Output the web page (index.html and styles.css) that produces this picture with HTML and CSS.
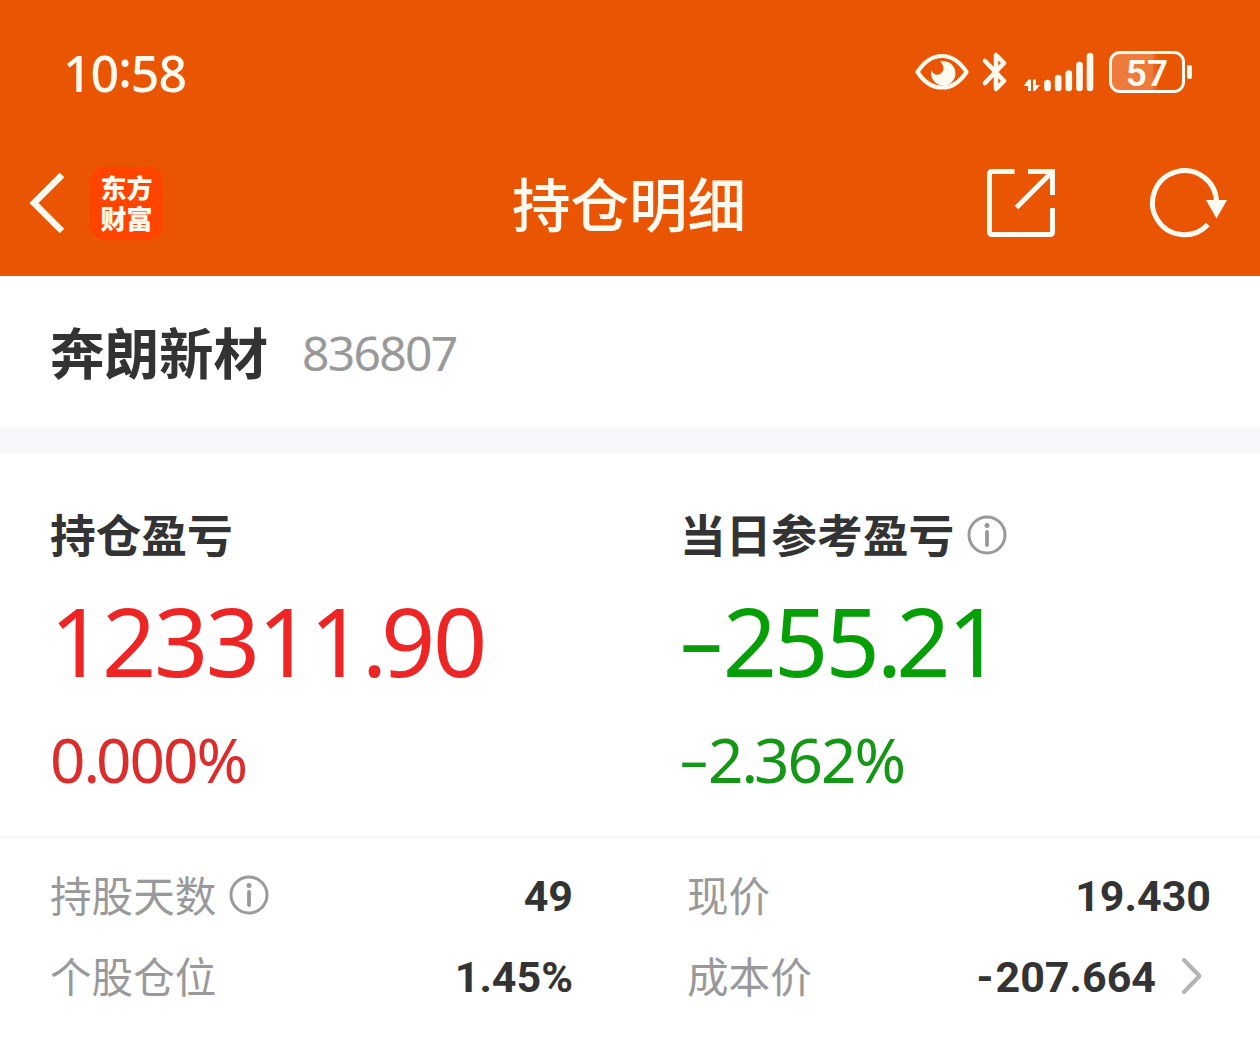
FILE: index.html
```html
<!DOCTYPE html>
<html lang="zh">
<head>
  <meta charset="UTF-8">
  <meta name="viewport" content="width=device-width, initial-scale=1.0">
  <title>持仓明细</title>
  <link rel="stylesheet" href="styles.css">
</head>
<body>

<!-- 顶部 -->
<header class="header">
  <div class="status-bar">
    <span class="time">10<span class="colon">:</span>58</span>
    <div class="status-icons">
      <svg class="icon-eye" width="54" height="40" viewBox="0 0 54 40">
        <path d="M2.500 20C9 10 17 4 27 4S45 10 51.500 20C45 30 37 35.500 27 35.500S9 30 2.500 20Z" fill="none" stroke="#fffaf0" stroke-width="4.200" stroke-linejoin="round"/>
        <path d="M25 9.500A12.200 12.200 0 1 1 16.500 18C17.500 22 21.500 24 25 22C30 19 29.500 13.500 25 9.500Z" fill="#fffaf0"/>
      </svg>
      <svg class="icon-bluetooth" width="26" height="42" viewBox="0 0 26 42">
        <path d="M3 10L22 30L14 38V26M3 32L22 12L14 4V16" fill="none" stroke="#fffaf0" stroke-width="4.500" stroke-linecap="round" stroke-linejoin="round"/>
      </svg>
      <svg class="icon-signal" width="72" height="42" viewBox="0 0 72 42">
        <path d="M0.500 35L5.500 28.500H8V40H5V35ZM10 28.500H13V34H17L12 40H10Z" fill="#fffaf0"/>
        <g stroke="#fffaf0" stroke-width="6.600" stroke-linecap="round">
          <path d="M24.500 32V37M35.200 27V37M45.800 22.500V37M56.500 14V37M67 5V37"/>
        </g>
      </svg>
      <div class="battery"><span>57</span></div>
      <i class="battery-cap"></i>
    </div>
  </div>
  <div class="nav-bar">
    <div class="nav-left">
      <svg width="36" height="62" viewBox="0 0 36 62">
        <path d="M33 3L5 31L33 59" fill="none" stroke="#fffaf0" stroke-width="6.500"/>
      </svg>
      <div class="logo">东方<br>财富</div>
    </div>
    <h1>持仓明细</h1>
    <div class="nav-right">
      <svg width="70" height="70" viewBox="0 0 70 70" fill="none" stroke="#fffaf0" stroke-width="5">
        <path d="M28.500 3.500H6Q3.500 3.500 3.500 6V64Q3.500 66.500 6 66.500H64Q66.500 66.500 66.500 64V40"/>
        <path d="M42 3.500H66.500V27M65 5L30.500 39.500"/>
      </svg>
      <svg width="80" height="72" viewBox="0 0 80 72">
        <path d="M58.900 57.500A32 32 0 1 1 67.500 36" fill="none" stroke="#fffaf0" stroke-width="5"/>
        <path d="M57 33H78L67.500 51.500Z" fill="#fffaf0"/>
      </svg>
    </div>
  </div>
</header>

<!-- 股票名称 -->
<section class="stock">
  <h2>奔朗新材</h2>
  <span class="code">836807</span>
</section>

<!-- 盈亏 -->
<section class="profit">
  <div class="profit-item red">
    <h3>持仓盈亏</h3>
    <p class="amount">123311<span class="dot">.</span>90</p>
    <p class="rate">0<span class="dot">.</span>000%</p>
  </div>
  <div class="profit-item green">
    <h3>当日参考盈亏
      <svg class="info" width="40" height="40" viewBox="0 0 40 40">
        <circle cx="20" cy="20" r="18" fill="none" stroke="#999" stroke-width="3"/>
        <circle cx="20" cy="10.500" r="2.500" fill="#999"/>
        <path d="M20 17V30" stroke="#999" stroke-width="3.800" stroke-linecap="round"/>
      </svg>
    </h3>
    <p class="amount"><span class="minus">–</span>255<span class="dot">.</span>21</p>
    <p class="rate"><span class="minus">–</span>2<span class="dot">.</span>362%</p>
  </div>
</section>

<!-- 明细 -->
<section class="detail">
  <div class="detail-item">
    <span class="label">持股天数</span>
    <svg class="info" width="40" height="40" viewBox="0 0 40 40">
      <circle cx="20" cy="20" r="18" fill="none" stroke="#999" stroke-width="3"/>
      <circle cx="20" cy="10.500" r="2.500" fill="#999"/>
      <path d="M20 17V30" stroke="#999" stroke-width="3.800" stroke-linecap="round"/>
    </svg>
    <span class="value">49</span>
  </div>
  <div class="detail-item">
    <span class="label">现价</span>
    <span class="value">19.430</span>
  </div>
  <div class="detail-item">
    <span class="label">个股仓位</span>
    <span class="value">1.45%</span>
  </div>
  <div class="detail-item">
    <span class="label">成本价</span>
    <span class="value"><span class="hyphen">-</span>207.664</span>
    <svg class="arrow" width="22" height="38" viewBox="0 0 22 38">
      <path d="M3 3L18.500 19L3 35" fill="none" stroke="#b4b4b4" stroke-width="4" stroke-linecap="round" stroke-linejoin="round"/>
    </svg>
  </div>
</section>

</body>
</html>
```
FILE: styles.css
```css
* {
  box-sizing: border-box;
  margin: 0;
  padding: 0;
}
body {
  width: 1260px;
  height: 1038px;
  overflow: hidden;
  background-color: #fff;
  color: #333;
  font-family: "Noto Sans", "Noto Sans CJK SC", sans-serif;
}
svg {
  display: block;
  flex: none;
}
.header {
  height: 276px;
  background-color: #ea5504;
  color: #fffaf0;
}
.status-bar {
  display: flex;
  align-items: center;
  justify-content: space-between;
  height: 144px;
  padding: 0 68px 0 63px;
}
.time {
  padding-top: 2px;
  font-size: 50px;
  line-height: 60px;
  font-weight: 500;
  letter-spacing: -1px;
}
.colon {
  vertical-align: 5px;
  line-height: 1;
}
.status-icons {
  display: flex;
  align-items: center;
}
.icon-bluetooth {
  margin-left: 13px;
}
.icon-signal {
  margin-left: 15px;
}
.battery {
  width: 76px;
  height: 42px;
  margin-left: 14px;
  border: 3px solid #fffaf0;
  border-radius: 11px;
  background: linear-gradient(to right, #ee7b3c 58%, #ec6a25 58%, #ea5504 68%);
  font: 600 37px/39px Roboto, sans-serif;
  text-align: center;
}
.battery-cap {
  width: 5px;
  height: 14px;
  margin-left: 2px;
  border-radius: 2px;
  background-color: #fffaf0;
}
.nav-bar {
  display: grid;
  grid-template-columns: 1fr auto 1fr;
  align-items: center;
  height: 118px;
  padding: 0 31px 0 29px;
}
.nav-left {
  display: flex;
  align-items: center;
}
.logo {
  width: 73px;
  height: 73px;
  margin-left: 25px;
  padding-top: 4px;
  border-radius: 15px;
  background-color: #ff4400;
  font: 900 26px/31px "Noto Sans CJK SC", sans-serif;
  text-align: center;
}
h1 {
  padding-top: 1px;
  font-size: 58.500px;
  line-height: 80px;
  font-weight: 500;
}
.nav-right {
  display: flex;
  align-items: center;
  justify-content: flex-end;
  gap: 93px;
}
.stock {
  display: flex;
  align-items: center;
  height: 178px;
  padding-left: 50px;
  border-bottom: 26px solid #f5f7fa;
}
h2 {
  padding-top: 2px;
  font-size: 54.500px;
  line-height: 80px;
  font-weight: 700;
}
.code {
  margin-left: 34px;
  padding-top: 2px;
  color: #999;
  font-size: 48px;
  line-height: 60px;
  letter-spacing: -1.700px;
}
.profit {
  display: grid;
  grid-template-columns: 630px 630px;
  height: 384px;
  padding-top: 47px;
  border-bottom: 2px solid #f8f8f8;
}
.profit-item {
  padding-left: 50px;
}
h3 {
  display: flex;
  align-items: center;
  gap: 13px;
  color: #333;
  font-size: 45.700px;
  line-height: 68px;
  font-weight: 700;
}
.amount {
  font-size: 95px;
  line-height: 110px;
  margin-top: 16px;
  letter-spacing: -2.400px;
}
.amount .dot {
  letter-spacing: -6px;
}
.rate {
  font-size: 62px;
  line-height: 80px;
  margin-top: 24px;
  letter-spacing: -2px;
}
.rate .dot {
  letter-spacing: -4px;
}
.minus {
  font-size: 0.9em;
  line-height: 1;
  letter-spacing: 0;
  vertical-align: 0.06em;
}
.red {
  color: #ee2525;
}
.red .rate {
  color: #dc2c2c;
}
.green {
  color: #079f07;
}
.green .amount {
  letter-spacing: -3px;
}
.green .rate {
  color: #149714;
}
.detail {
  display: grid;
  grid-template-columns: 573px 524px;
  column-gap: 114px;
  grid-auto-rows: 81px;
  padding-top: 16px;
}
.detail-item {
  display: flex;
  align-items: center;
}
.detail-item:nth-child(odd) {
  padding-left: 50px;
}
.label {
  padding-bottom: 2px;
  color: #999;
  font-size: 41.600px;
}
.detail-item .info {
  margin-left: 13px;
}
.value {
  margin-left: auto;
  padding-top: 2px;
  font-family: Roboto, sans-serif;
  font-size: 43px;
  font-weight: 700;
}
.hyphen {
  margin-right: 2px;
}
.arrow {
  margin: 0 8px 0 25px;
}
```
